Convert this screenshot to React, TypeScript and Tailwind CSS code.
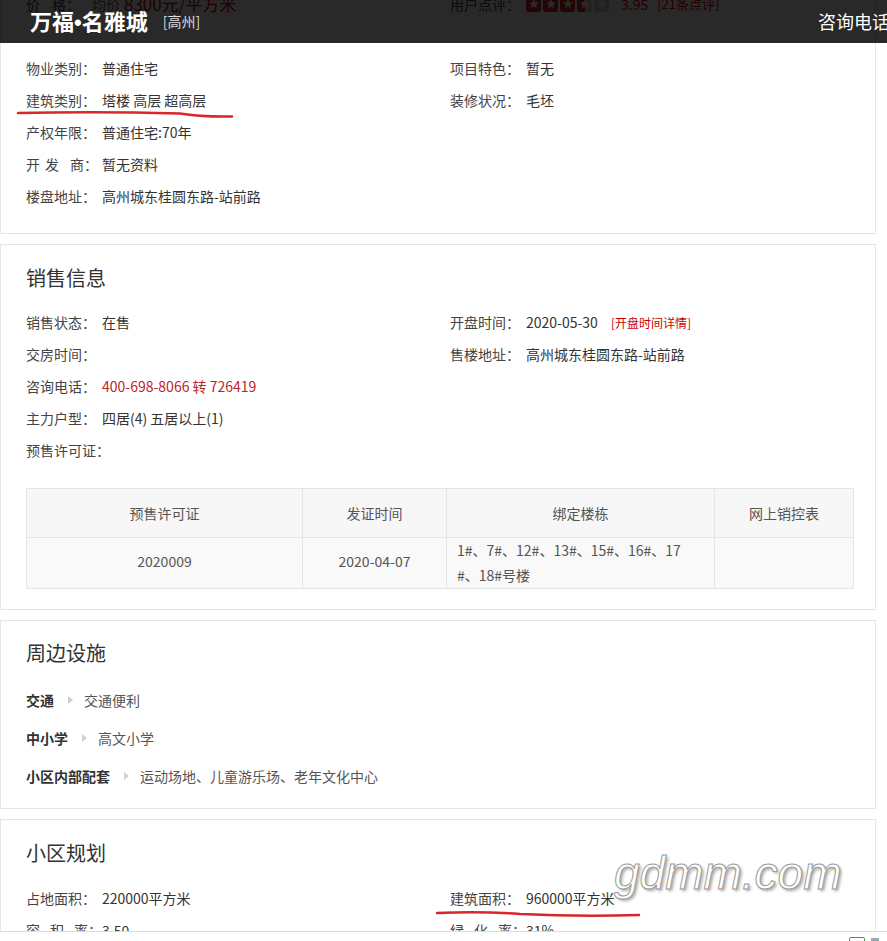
import React from 'react';

type ItemProps = { label: React.ReactNode; children?: React.ReactNode };

function Item({ label, children }: ItemProps) {
  return (
    <div className="flex h-[32px] items-center text-[14px] text-[#333]">
      <span className="min-w-[76px] shrink-0 whitespace-nowrap text-[#444]">{label}</span>
      <span className="whitespace-nowrap">{children}</span>
    </div>
  );
}

function Spaced({ chars, gaps }: { chars: string[]; gaps: number[] }) {
  return (
    <span className="inline-flex">
      {chars.map((c, i) => (
        <span key={i} style={{ marginRight: i < gaps.length ? gaps[i] : 0 }}>
          {c}
        </span>
      ))}
      <span>：</span>
    </span>
  );
}

function Fac({ label, value }: { label: string; value: string }) {
  return (
    <div className="flex h-[38px] items-center text-[14px]">
      <span className="font-bold text-[#333]">{label}</span>
      <span className="ml-[14px] h-0 w-0 border-y-[4px] border-l-[5px] border-y-transparent border-l-[#cfcfcf]" />
      <span className="ml-[11px] text-[#555]">{value}</span>
    </div>
  );
}

function Star({ fill }: { fill: number }) {
  return (
    <div className="relative h-[15px] w-[15px] overflow-hidden rounded-[3px] bg-[#cfcfcf]">
      <div className="absolute left-0 top-0 h-full bg-[#d22]" style={{ width: `${fill * 100}%` }} />
      <svg viewBox="0 0 24 24" className="absolute left-[1.5px] top-[1.5px] h-[12px] w-[12px]">
        <path d="M12 2.5l2.9 6.1 6.6.8-4.9 4.5 1.3 6.6L12 17.2l-5.9 3.3 1.3-6.6-4.9-4.5 6.6-.8z" fill="#fff" />
      </svg>
    </div>
  );
}

function Title({ children }: { children: React.ReactNode }) {
  return <div className="h-[30px] text-[20px] leading-[30px] text-[#333]">{children}</div>;
}

export default function App() {
  return (
    <div className="relative h-[941px] w-[887px] overflow-hidden bg-white font-['Noto_Sans_CJK_SC','Noto_Sans',sans-serif]">
      <div className="-mt-[13px] flex w-[876px] flex-col gap-[10px]">
        {/* Card 1 */}
        <div className="border border-[#e5e5e5] bg-white px-[25px] pb-[21px]">
          <div className="grid grid-cols-[424px_1fr]">
            <div className="flex h-[32px] items-center text-[14px]">
              <span className="min-w-[66px] text-[#444]">
                <Spaced chars={['价', '格']} gaps={[12]} />
              </span>
              <span className="text-[#666]">均价</span>
              <span className="ml-[4px] text-[17px] text-[#c00]">8300元/平方米</span>
            </div>
            <div className="flex h-[32px] items-center text-[14px]">
              <span className="min-w-[76px] text-[#444]">用户点评：</span>
              <div className="flex gap-[2px]">
                <Star fill={1} />
                <Star fill={1} />
                <Star fill={1} />
                <Star fill={0.5} />
                <Star fill={0} />
              </div>
              <span className="ml-[12px] text-[#c00]">3.95</span>
              <span className="ml-[9px] text-[13px] text-[#c00]">[21条点评]</span>
            </div>
          </div>
          <div className="h-[32px]" />
          <div className="grid grid-cols-[424px_1fr]">
            <Item label="物业类别：">普通住宅</Item>
            <Item label="项目特色：">暂无</Item>
            <Item label="建筑类别：">塔楼 高层 超高层</Item>
            <Item label="装修状况：">毛坯</Item>
            <Item label="产权年限：">普通住宅:70年</Item>
            <div />
            <Item label={<Spaced chars={['开', '发', '商']} gaps={[5, 11]} />}>暂无资料</Item>
            <div />
            <Item label="楼盘地址：">高州城东桂圆东路-站前路</Item>
            <div />
          </div>
        </div>

        {/* Card 2 */}
        <div className="border border-[#e5e5e5] bg-white px-[25px] pb-[20px] pt-[18px]">
          <Title>销售信息</Title>
          <div className="mt-[13px] grid grid-cols-[424px_1fr]">
            <Item label="销售状态：">在售</Item>
            <Item label="开盘时间：">
              2020-05-30
              <span className="ml-[13px] text-[12px] text-[#c00]">[开盘时间详情]</span>
            </Item>
            <Item label="交房时间：" />
            <Item label="售楼地址：">高州城东桂圆东路-站前路</Item>
            <Item label="咨询电话：">
              <span className="text-[#c0222a]">400-698-8066 转 726419</span>
            </Item>
            <div />
            <Item label="主力户型：">四居(4) 五居以上(1)</Item>
            <div />
            <Item label="预售许可证：" />
            <div />
          </div>
          <table className="mt-[22px] w-[827px] table-fixed border-collapse text-[14px] text-[#555]">
            <colgroup>
              <col className="w-[276px]" />
              <col className="w-[144px]" />
              <col className="w-[268px]" />
              <col className="w-[139px]" />
            </colgroup>
            <thead>
              <tr className="h-[49px] bg-[#f7f7f7]">
                <th className="border border-[#e5e5e5] font-normal">预售许可证</th>
                <th className="border border-[#e5e5e5] font-normal">发证时间</th>
                <th className="border border-[#e5e5e5] font-normal">绑定楼栋</th>
                <th className="border border-[#e5e5e5] font-normal">网上销控表</th>
              </tr>
            </thead>
            <tbody>
              <tr className="h-[51px] bg-[#f9f9f9]">
                <td className="border border-[#e5e5e5] pb-[3px] text-center">2020009</td>
                <td className="border border-[#e5e5e5] pb-[3px] text-center">2020-04-07</td>
                <td className="border border-[#e5e5e5] px-[10px] text-left leading-[25px]">
                  1#、7#、12#、13#、15#、16#、17
                  <br />
                  #、18#号楼
                </td>
                <td className="border border-[#e5e5e5]" />
              </tr>
            </tbody>
          </table>
        </div>

        {/* Card 3 */}
        <div className="border border-[#e5e5e5] bg-white px-[25px] pb-[13px] pt-[17px]">
          <Title>周边设施</Title>
          <div className="mt-[13px]">
            <Fac label="交通" value="交通便利" />
            <Fac label="中小学" value="高文小学" />
            <Fac label="小区内部配套" value="运动场地、儿童游乐场、老年文化中心" />
          </div>
        </div>

        {/* Card 4 */}
        <div className="border border-[#e5e5e5] bg-white px-[25px] pb-[20px] pt-[18px]">
          <Title>小区规划</Title>
          <div className="mt-[14px] grid grid-cols-[424px_1fr]">
            <Item label="占地面积：">220000平方米</Item>
            <Item label="建筑面积：">960000平方米</Item>
            <Item label={<Spaced chars={['容', '积', '率']} gaps={[10, 10]} />}>3.50</Item>
            <Item label={<Spaced chars={['绿', '化', '率']} gaps={[10, 10]} />}>31%</Item>
            <Item label="总户数：">暂无资料</Item>
            <Item label="停车位：">暂无资料</Item>
          </div>
        </div>
      </div>

      {/* Header overlay */}
      <div className="absolute left-0 top-0 flex h-[43px] w-full items-center overflow-hidden bg-[rgba(0,0,0,0.84)] pl-[30px]">
        <span className="shrink-0 whitespace-nowrap text-[22px] font-bold leading-none text-white">
          万福<span className="font-['Liberation_Sans',sans-serif]">•</span>名雅城
        </span>
        <span className="ml-[15px] shrink-0 whitespace-nowrap text-[14px] text-[#ddd]">[高州]</span>
        <span className="absolute left-[818px] top-[9px] whitespace-nowrap text-[18px] leading-[24px] text-white">
          咨询电话：400-698-8066 转 726419
        </span>
      </div>

      {/* Hand-drawn red underlines */}
      <svg className="pointer-events-none absolute left-0 top-0" width="887" height="941">
        <path d="M18 113 Q 100 111.5 180 113.5 Q 200 117 232 116.5" fill="none" stroke="#d9262a" strokeWidth="2.5" strokeLinecap="round" />
        <path d="M437 913 Q 480 911 520 914 Q 580 917 639 915" fill="none" stroke="#d9262a" strokeWidth="2.5" strokeLinecap="round" />
      </svg>

      {/* Watermark */}
      <div className="pointer-events-none absolute left-[614px] top-[850px] font-['Liberation_Sans',sans-serif] text-[46px] italic leading-none text-white [-webkit-text-stroke:1px_#9a9a9a] [text-shadow:2px_2px_3px_rgba(0,0,0,0.35)]">
        gdmm.com
      </div>

      {/* Bottom strip */}
      <div className="absolute bottom-0 left-0 h-[10px] w-full border-t border-[#dcdcdc] bg-white">
        <div className="absolute left-[849px] top-[5px] h-[10px] w-[16px] rounded-[2px] border border-[#3a9a4a]" />
        <div className="absolute left-[871px] top-[6px] h-[4px] w-[8px] bg-[#9aa]" />
      </div>
    </div>
  );
}
